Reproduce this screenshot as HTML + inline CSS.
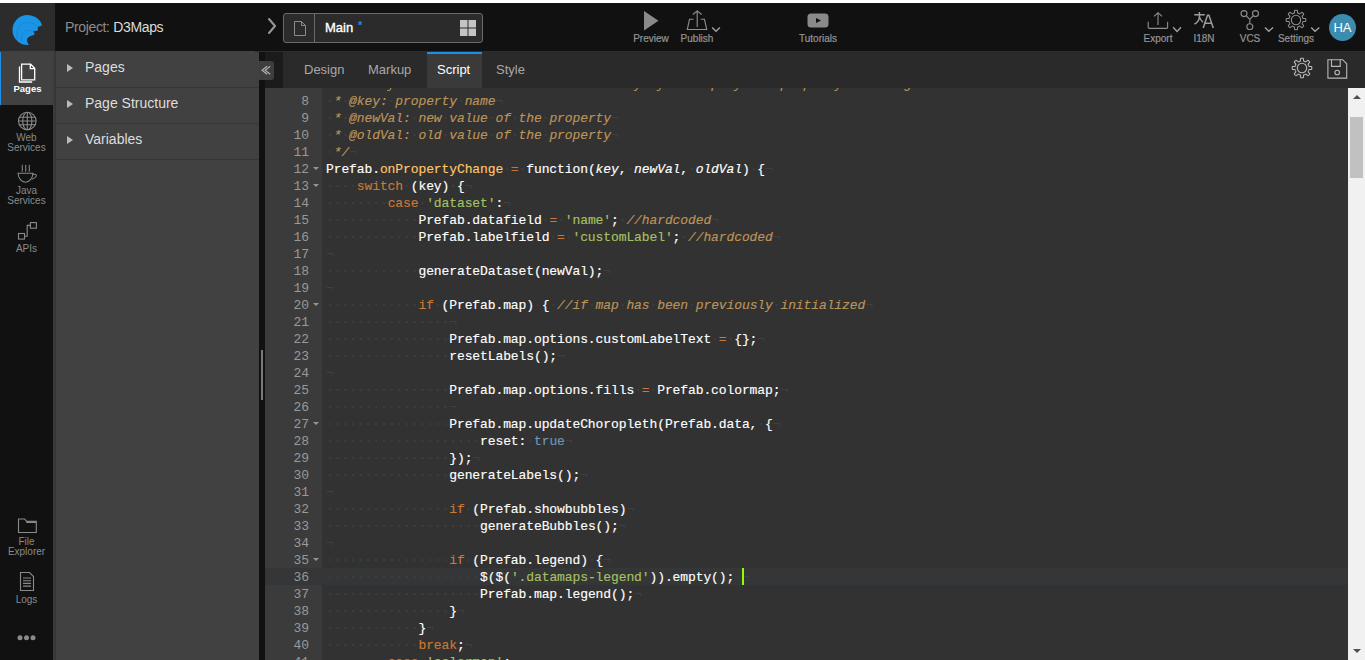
<!DOCTYPE html>
<html><head><meta charset="utf-8">
<style>
*{margin:0;padding:0;box-sizing:border-box}
html,body{width:1365px;height:660px;overflow:hidden;background:#fff;font-family:"Liberation Sans",sans-serif}
.a{position:absolute}
#hdr{left:0;top:3px;width:1365px;height:48px;background:#111}
#logo{left:0;top:0;width:55px;height:48px;background:#2c2c2c}
#nav{left:0;top:51px;width:53px;height:609px;background:#111}
#navb{left:53px;top:51px;width:3px;height:609px;background:#3b3b3b;border-right:1px solid #353535}
#panel{left:56px;top:51px;width:203px;height:609px;background:#414141}
.prow{position:absolute;left:0;width:203px;height:36px;border-bottom:1px solid #363636;color:#ddd;font-size:14px}
.prow .tri{position:absolute;left:11px;top:12px;width:0;height:0;border-left:6px solid #bbb;border-top:4px solid transparent;border-bottom:4px solid transparent}
.prow span{position:absolute;left:29px;top:7px}
#split{left:259px;top:52px;width:6px;height:608px;background:#111}
#tabbar{left:265px;top:52px;width:1100px;height:36px;background:#2a2a2a}
#tline{left:255px;top:51px;width:1110px;height:1px;background:#2e2e2e}
.tab{position:absolute;top:10px;font-size:13px;color:#a8a8a8}
#editor{left:265px;top:88px;width:1100px;height:572px;background:#323232;overflow:hidden}
#gutter{left:0;top:0;width:57px;height:572px;background:#3b3b3b;overflow:hidden}
#actline{left:57px;top:480px;width:1043px;height:17px;background:#353637}
#gact{left:0;top:480px;width:57px;height:17px;background:#353637}
.gn{position:absolute;left:0;width:44px;height:17px;text-align:right;font:13px/17px "Liberation Mono",monospace;letter-spacing:-0.1px;color:#999;padding-top:1px}
.gn u{position:absolute;left:47.5px;top:7px;width:0;height:0;border-top:3.5px solid #959595;border-left:3px solid transparent;border-right:3px solid transparent}
#code{left:61px;top:0;width:1000px;height:572px}
.ln{position:absolute;left:0;height:17px;white-space:pre;font:13px/17px "Liberation Mono",monospace;letter-spacing:-0.1px;color:#fff;padding-top:1px;-webkit-text-stroke:0.15px}
.ln b{font-weight:normal}
.ln i{font-style:normal;color:#404040}
.ln .k{color:#CC7833}
.ln .s{color:#A5C261}
.ln .t{color:#6C99BB}
.ln .c{color:#BC9458;font-style:italic}
.ln .f{color:#FFC66D}
.ln .p{font-style:italic}
#cursor{left:477px;top:480px;width:2px;height:17px;background:#91FF00}
#vscroll{left:1083px;top:0;width:17px;height:572px;background:#f1f1f1}
#thumb{left:2px;top:29px;width:13px;height:61px;background:#c1c1c1}
#sup{left:4.5px;top:7px;width:0;height:0;border-bottom:4px solid #505050;border-left:4.5px solid transparent;border-right:4.5px solid transparent}
#sdn{left:4.5px;top:561px;width:0;height:0;border-top:4px solid #505050;border-left:4.5px solid transparent;border-right:4.5px solid transparent}
.navi{position:absolute;left:0;width:53px;text-align:center;color:#8a8a8a;font-size:10px;line-height:10px}
.tb{position:absolute;color:#959595;font-size:10px;text-align:center;-webkit-text-stroke:0.2px #959595}
.chev{position:absolute}
</style></head><body>
<div id="hdr" class="a">
  <div id="logo" class="a"><svg class="a" style="left:0;top:-3px" width="55" height="51" viewBox="0 0 55 51">
   <path fill="#1a95e6" d="M28.9,44.9 A15,15 0 1 1 26.5,15 C31,15 35,16.5 37.5,18.5 C39.8,20.3 41.5,23 42,25.3 C40,26.8 38.5,26.8 37.3,27.1 C38.2,28 38.2,29.5 37.6,30.4 C36,31 34,31 32.9,31.5 C34.2,32.3 34.8,33.8 34.4,34.7 C32.5,35.3 30,36 28.4,37.3 C27,38.5 26.8,40.5 27.3,41.8 C27.7,43 28.2,44.3 28.9,44.9 Z"/>
   <path fill="none" stroke="#1580cc" stroke-width="0.7" d="M17.5,40 C16,33 17.5,27 22.5,23.6 C25,22.5 29,22.5 31.6,23 C33.5,23.3 35,24.3 35.8,25.3"/>
   <path fill="none" stroke="#1580cc" stroke-width="0.7" d="M21.8,41 C21,37 21.5,33 25.5,30.5 C27.5,29.8 31,30 32.9,31.5"/>
  </svg></div>
  <div class="a" style="left:65px;top:16px;font-size:14px;letter-spacing:-0.35px;color:#8c8c8c;white-space:nowrap">Project: <span style="color:#dcdcdc">D3Maps</span></div>
  <svg class="a" style="left:266px;top:14px" width="12" height="18" viewBox="0 0 12 18"><path d="M3,2 L9,9 L3,16" fill="none" stroke="#999" stroke-width="2" stroke-linecap="round" stroke-linejoin="round"/></svg>
  <div class="a" style="left:283px;top:10px;width:200px;height:30px;border:1px solid #6a6a6a;border-radius:3px;background:#2b2b2b">
    <div class="a" style="left:30px;top:0;width:1px;height:28px;background:#6a6a6a"></div>
    <svg class="a" style="left:9px;top:6px" width="14" height="17" viewBox="0 0 14 17"><path d="M1.5,1.5 H8.5 L12.5,5.5 V15.5 H1.5 Z M8.5,1.5 V5.5 H12.5" fill="none" stroke="#8a8a8a" stroke-width="1"/></svg>
    <div class="a" style="left:41px;top:6px;font-size:13px;color:#fff;-webkit-text-stroke:0.35px #fff">Main</div>
    <div class="a" style="left:74px;top:5px;font-size:11px;font-weight:bold;color:#2a86e0">*</div>
    <svg class="a" style="left:176px;top:6px" width="17" height="17" viewBox="0 0 17 17"><g fill="#c4c4c4"><rect x="0" y="0" width="7.5" height="7.5"/><rect x="8.5" y="0" width="7.5" height="7.5"/><rect x="0" y="8.5" width="7.5" height="7.5"/><rect x="8.5" y="8.5" width="7.5" height="7.5"/></g></svg>
  </div>
  <!-- toolbar -->
  <svg class="a" style="left:644px;top:8px" width="15" height="20" viewBox="0 0 15 20"><path d="M0,0 L14.5,9.8 L0,19.6 Z" fill="#8a8a8a"/></svg>
  <div class="tb" style="left:621px;top:30px;width:60px">Preview</div>
  <svg class="a" style="left:685px;top:3px" width="24" height="26" viewBox="0 0 24 26"><g fill="none" stroke="#8f8f8f" stroke-width="1.1"><path d="M12.2,21 V5 M7.8,8.5 L12.2,4.9 L16.6,8.5"/><path d="M8.5,13.3 H4.5 L2.3,23.5 H21.7 L19.5,13.3 H15.8"/></g></svg>
  <svg class="chev" style="left:711px;top:22px" width="10" height="8" viewBox="0 0 10 8"><path d="M1.2,2.5 L5,6.3 L8.9,2.5" fill="none" stroke="#a0a0a0" stroke-width="1.4"/></svg>
  <div class="tb" style="left:667px;top:30px;width:60px">Publish</div>
  <svg class="a" style="left:807px;top:10px" width="22" height="15" viewBox="0 0 22 15"><rect x="0.5" y="0.5" width="21" height="14" rx="3.5" fill="#8a8a8a"/><path d="M9,5 L14,7.5 L9,10 Z" fill="#111"/></svg>
  <div class="tb" style="left:788px;top:30px;width:60px">Tutorials</div>
  <svg class="a" style="left:1146px;top:5px" width="24" height="24" viewBox="0 0 24 24"><g fill="none" stroke="#8f8f8f" stroke-width="1.1"><path d="M12,17 V5 M8,8.4 L12,4.7 L16.1,8.4"/><path d="M2.2,13.8 V19.5 Q2.2,20.4 3.2,20.4 H20.6 Q21.6,20.4 21.6,19.5 V13.8"/></g></svg>
  <svg class="chev" style="left:1172px;top:22px" width="10" height="8" viewBox="0 0 10 8"><path d="M1.1,2.3 L5.1,6.4 L9,2.3" fill="none" stroke="#a0a0a0" stroke-width="1.4"/></svg>
  <div class="tb" style="left:1128px;top:30px;width:60px">Export</div>
  <svg class="a" style="left:1190px;top:5px" width="28" height="26" viewBox="1190 8 28 26"><g fill="none" stroke="#9c9c9c" stroke-width="1.5"><path d="M1194.2,14.8 H1204.8 M1199.4,12 V16.5 C1199.4,19.5 1197.5,22.5 1194.4,24.2 M1199.6,17.5 C1200.5,19.5 1201.6,21 1203,22.3"/><path d="M1203.2,27.9 L1207.5,15.2 H1208.9 L1213.3,27.9 M1204.8,23.3 H1211.6"/></g></svg>
  
  <div class="tb" style="left:1174px;top:30px;width:60px">I18N</div>
  <svg class="a" style="left:1238px;top:3px" width="24" height="24" viewBox="0 0 24 24"><g fill="none" stroke="#8f8f8f" stroke-width="1.1"><circle cx="6" cy="7.6" r="3"/><circle cx="17.5" cy="7.6" r="3"/><circle cx="11.8" cy="20.7" r="3"/><path d="M8.4,10 L11.8,13.3 L15.1,10 M11.8,13.3 V17.7"/></g></svg>
  <svg class="chev" style="left:1264px;top:22px" width="10" height="8" viewBox="0 0 10 8"><path d="M1,2.4 L4.8,6.2 L9.1,2.4" fill="none" stroke="#a0a0a0" stroke-width="1.4"/></svg>
  <div class="tb" style="left:1220px;top:30px;width:60px">VCS</div>
  <svg class="a" style="left:1285px;top:6px" width="22" height="22" viewBox="-11 -11 22 22"><path fill="none" stroke="#8f8f8f" stroke-width="1.1" stroke-linejoin="round" d="M0.00,-9.80 L0.38,-9.79 L0.77,-9.77 L1.15,-9.73 L1.44,-9.09 L1.55,-7.78 L1.66,-6.93 L1.93,-6.83 L2.19,-6.75 L2.46,-6.66 L2.72,-6.56 L2.97,-6.45 L3.22,-6.33 L3.47,-6.19 L3.72,-6.08 L4.41,-6.60 L5.41,-7.44 L6.07,-7.70 L6.36,-7.45 L6.65,-7.20 L6.93,-6.93 L7.20,-6.65 L7.45,-6.36 L7.70,-6.07 L7.44,-5.41 L6.60,-4.41 L6.08,-3.72 L6.19,-3.47 L6.33,-3.22 L6.45,-2.97 L6.56,-2.72 L6.66,-2.46 L6.75,-2.19 L6.83,-1.93 L6.93,-1.66 L7.78,-1.55 L9.09,-1.44 L9.73,-1.15 L9.77,-0.77 L9.79,-0.38 L9.80,0.00 L9.79,0.38 L9.77,0.77 L9.73,1.15 L9.09,1.44 L7.78,1.55 L6.93,1.66 L6.83,1.93 L6.75,2.19 L6.66,2.46 L6.56,2.72 L6.45,2.97 L6.33,3.22 L6.19,3.47 L6.08,3.72 L6.60,4.41 L7.44,5.41 L7.70,6.07 L7.45,6.36 L7.20,6.65 L6.93,6.93 L6.65,7.20 L6.36,7.45 L6.07,7.70 L5.41,7.44 L4.41,6.60 L3.72,6.08 L3.47,6.19 L3.22,6.33 L2.97,6.45 L2.72,6.56 L2.46,6.66 L2.19,6.75 L1.93,6.83 L1.66,6.93 L1.55,7.78 L1.44,9.09 L1.15,9.73 L0.77,9.77 L0.38,9.79 L0.00,9.80 L-0.38,9.79 L-0.77,9.77 L-1.15,9.73 L-1.44,9.09 L-1.55,7.78 L-1.66,6.93 L-1.93,6.83 L-2.19,6.75 L-2.46,6.66 L-2.72,6.56 L-2.97,6.45 L-3.22,6.33 L-3.47,6.19 L-3.72,6.08 L-4.41,6.60 L-5.41,7.44 L-6.07,7.70 L-6.36,7.45 L-6.65,7.20 L-6.93,6.93 L-7.20,6.65 L-7.45,6.36 L-7.70,6.07 L-7.44,5.41 L-6.60,4.41 L-6.08,3.72 L-6.19,3.47 L-6.33,3.22 L-6.45,2.97 L-6.56,2.72 L-6.66,2.46 L-6.75,2.19 L-6.83,1.93 L-6.93,1.66 L-7.78,1.55 L-9.09,1.44 L-9.73,1.15 L-9.77,0.77 L-9.79,0.38 L-9.80,0.00 L-9.79,-0.38 L-9.77,-0.77 L-9.73,-1.15 L-9.09,-1.44 L-7.78,-1.55 L-6.93,-1.66 L-6.83,-1.93 L-6.75,-2.19 L-6.66,-2.46 L-6.56,-2.72 L-6.45,-2.97 L-6.33,-3.22 L-6.19,-3.47 L-6.08,-3.72 L-6.60,-4.41 L-7.44,-5.41 L-7.70,-6.07 L-7.45,-6.36 L-7.20,-6.65 L-6.93,-6.93 L-6.65,-7.20 L-6.36,-7.45 L-6.07,-7.70 L-5.41,-7.44 L-4.41,-6.60 L-3.72,-6.08 L-3.47,-6.19 L-3.22,-6.33 L-2.97,-6.45 L-2.72,-6.56 L-2.46,-6.66 L-2.19,-6.75 L-1.93,-6.83 L-1.66,-6.93 L-1.55,-7.78 L-1.44,-9.09 L-1.15,-9.73 L-0.77,-9.77 L-0.38,-9.79 Z"/><circle r="4.7" fill="none" stroke="#8f8f8f" stroke-width="1.1"/></svg>
  <svg class="chev" style="left:1310px;top:22px" width="10" height="8" viewBox="0 0 10 8"><path d="M1.2,2.4 L5,6.2 L9.3,2.4" fill="none" stroke="#a0a0a0" stroke-width="1.4"/></svg>
  <div class="tb" style="left:1266px;top:30px;width:60px">Settings</div>
  <div class="a" style="left:1329px;top:11px;width:27px;height:27px;border-radius:50%;background:#3b8caf;color:#fff;font-size:13px;line-height:27px;text-align:center">HA</div>
</div>
<div id="nav" class="a">
  <div class="a" style="left:0;top:0;width:53px;height:54px;background:#414141"></div>
  <div class="a" style="left:0;top:1px;width:1px;height:53px;background:#1d8fe6"></div>
  <svg class="a" style="left:18px;top:12px" width="19" height="21" viewBox="0 0 19 21"><g fill="none" stroke="#fff" stroke-width="1.3"><path d="M3.6,1.2 H12.6 L16.7,5.3 V16.9 H3.6 Z M12.3,1.5 V5.6 H16.4"/><path d="M1.5,3.5 V19 H14.2"/></g></svg>
  <div class="navi" style="top:33px;color:#fff;font-weight:bold;font-size:9.5px;left:1px">Pages</div>
  <svg class="a" style="left:17px;top:60px" width="21" height="21" viewBox="0 0 21 21"><g fill="none" stroke="#8a8a8a" stroke-width="1.1"><circle cx="10.3" cy="10" r="8.8"/><ellipse cx="10.3" cy="10" rx="4.6" ry="8.8"/><path d="M10.3,1.2 V18.8 M1.5,10 H19.1 M2.6,6.3 H18 M2.6,13.7 H18"/></g></svg>
  <div class="navi" style="top:81.5px">Web</div>
  <div class="navi" style="top:91.5px">Services</div>
  <svg class="a" style="left:17px;top:112px" width="21" height="21" viewBox="0 0 21 21"><g fill="none" stroke="#8a8a8a" stroke-width="1.05"><path d="M5.6,1.8 C4.2,3.4 6.4,5.6 4.9,8.7 M9.1,1.8 C7.7,3.4 9.9,5.6 8.4,8.7 M12.6,1.8 C11.2,3.4 13.4,5.6 11.9,8.7"/><path d="M1,10.3 H16 C15.5,15.5 12.5,19.2 8.5,19.2 C4.5,19.2 1.5,15.5 1,10.3 Z"/><path d="M15.8,11.6 C18,10.6 19.9,11.6 19.3,13.1 C18.7,14.6 16.6,15.6 14.8,16.3"/></g></svg>
  <div class="navi" style="top:134.5px">Java</div>
  <div class="navi" style="top:144.5px">Services</div>
  <svg class="a" style="left:17px;top:170px" width="21" height="20" viewBox="0 0 21 20"><g fill="none" stroke="#8a8a8a" stroke-width="1.1"><rect x="1.5" y="12.5" width="6" height="5.6"/><rect x="13.4" y="1.6" width="6" height="5.6"/><path d="M7.5,15.3 H10.2 V4.4 H13.4"/></g></svg>
  <div class="navi" style="top:192.5px">APIs</div>
  <svg class="a" style="left:17px;top:466px" width="21" height="17" viewBox="0 0 21 17"><g fill="none" stroke="#8a8a8a" stroke-width="1.1"><path d="M1.5,15.5 V2 H7.6 L9.4,4.2 H19.3 V15.5 Z"/><path d="M9.2,5.1 H19.3" stroke-width="1.8"/></g></svg>
  <div class="navi" style="top:485.5px">File</div>
  <div class="navi" style="top:495.5px">Explorer</div>
  <svg class="a" style="left:19px;top:520px" width="16" height="21" viewBox="0 0 16 21"><g fill="none" stroke="#8a8a8a" stroke-width="1.1"><path d="M1.5,1.5 H10.5 L14.5,5.5 V19.5 H1.5 Z"/><path d="M4,7 H12 M4,9.7 H12 M4,12.4 H12 M4,15.1 H12"/></g></svg>
  <div class="navi" style="top:543.5px">Logs</div>
  <svg class="a" style="left:16px;top:583px" width="22" height="8" viewBox="0 0 22 8"><g fill="#8a8a8a"><circle cx="4" cy="3.7" r="2.5"/><circle cx="10.5" cy="3.7" r="2.5"/><circle cx="17" cy="3.7" r="2.5"/></g></svg>
</div>
<div id="navb" class="a"></div>
<div id="panel" class="a">
  <div class="prow" style="top:1px"><i class="tri"></i><span>Pages</span></div>
  <div class="prow" style="top:37px"><i class="tri"></i><span>Page Structure</span></div>
  <div class="prow" style="top:73px"><i class="tri"></i><span>Variables</span></div>
</div>
<div id="split" class="a"></div>
<div id="tline" class="a"></div>
<div id="tabbar" class="a">
  <div class="a" style="left:0;top:0;width:18px;height:36px;background:#1b1b1b"></div>
  <div class="tab" style="left:39px">Design</div>
  <div class="tab" style="left:103px">Markup</div>
  <div class="a" style="left:162px;top:0;width:55px;height:36px;background:#3a3a3a;border-top:2px solid #1d8fe6"></div>
  <div class="tab" style="left:172px;color:#fff">Script</div>
  <div class="tab" style="left:231px">Style</div>
  <svg class="a" style="left:1026px;top:5px" width="22" height="22" viewBox="-11 -11 22 22"><path fill="none" stroke="#b8b8b8" stroke-width="1.1" stroke-linejoin="round" d="M0.00,-9.80 L0.38,-9.79 L0.77,-9.77 L1.15,-9.73 L1.44,-9.09 L1.55,-7.78 L1.66,-6.93 L1.93,-6.83 L2.19,-6.75 L2.46,-6.66 L2.72,-6.56 L2.97,-6.45 L3.22,-6.33 L3.47,-6.19 L3.72,-6.08 L4.41,-6.60 L5.41,-7.44 L6.07,-7.70 L6.36,-7.45 L6.65,-7.20 L6.93,-6.93 L7.20,-6.65 L7.45,-6.36 L7.70,-6.07 L7.44,-5.41 L6.60,-4.41 L6.08,-3.72 L6.19,-3.47 L6.33,-3.22 L6.45,-2.97 L6.56,-2.72 L6.66,-2.46 L6.75,-2.19 L6.83,-1.93 L6.93,-1.66 L7.78,-1.55 L9.09,-1.44 L9.73,-1.15 L9.77,-0.77 L9.79,-0.38 L9.80,0.00 L9.79,0.38 L9.77,0.77 L9.73,1.15 L9.09,1.44 L7.78,1.55 L6.93,1.66 L6.83,1.93 L6.75,2.19 L6.66,2.46 L6.56,2.72 L6.45,2.97 L6.33,3.22 L6.19,3.47 L6.08,3.72 L6.60,4.41 L7.44,5.41 L7.70,6.07 L7.45,6.36 L7.20,6.65 L6.93,6.93 L6.65,7.20 L6.36,7.45 L6.07,7.70 L5.41,7.44 L4.41,6.60 L3.72,6.08 L3.47,6.19 L3.22,6.33 L2.97,6.45 L2.72,6.56 L2.46,6.66 L2.19,6.75 L1.93,6.83 L1.66,6.93 L1.55,7.78 L1.44,9.09 L1.15,9.73 L0.77,9.77 L0.38,9.79 L0.00,9.80 L-0.38,9.79 L-0.77,9.77 L-1.15,9.73 L-1.44,9.09 L-1.55,7.78 L-1.66,6.93 L-1.93,6.83 L-2.19,6.75 L-2.46,6.66 L-2.72,6.56 L-2.97,6.45 L-3.22,6.33 L-3.47,6.19 L-3.72,6.08 L-4.41,6.60 L-5.41,7.44 L-6.07,7.70 L-6.36,7.45 L-6.65,7.20 L-6.93,6.93 L-7.20,6.65 L-7.45,6.36 L-7.70,6.07 L-7.44,5.41 L-6.60,4.41 L-6.08,3.72 L-6.19,3.47 L-6.33,3.22 L-6.45,2.97 L-6.56,2.72 L-6.66,2.46 L-6.75,2.19 L-6.83,1.93 L-6.93,1.66 L-7.78,1.55 L-9.09,1.44 L-9.73,1.15 L-9.77,0.77 L-9.79,0.38 L-9.80,0.00 L-9.79,-0.38 L-9.77,-0.77 L-9.73,-1.15 L-9.09,-1.44 L-7.78,-1.55 L-6.93,-1.66 L-6.83,-1.93 L-6.75,-2.19 L-6.66,-2.46 L-6.56,-2.72 L-6.45,-2.97 L-6.33,-3.22 L-6.19,-3.47 L-6.08,-3.72 L-6.60,-4.41 L-7.44,-5.41 L-7.70,-6.07 L-7.45,-6.36 L-7.20,-6.65 L-6.93,-6.93 L-6.65,-7.20 L-6.36,-7.45 L-6.07,-7.70 L-5.41,-7.44 L-4.41,-6.60 L-3.72,-6.08 L-3.47,-6.19 L-3.22,-6.33 L-2.97,-6.45 L-2.72,-6.56 L-2.46,-6.66 L-2.19,-6.75 L-1.93,-6.83 L-1.66,-6.93 L-1.55,-7.78 L-1.44,-9.09 L-1.15,-9.73 L-0.77,-9.77 L-0.38,-9.79 Z"/><circle r="4.7" fill="none" stroke="#b8b8b8" stroke-width="1.1"/></svg>
  <svg class="a" style="left:1061px;top:5px" width="22" height="22" viewBox="0 0 22 22"><g fill="none" stroke="#b8b8b8" stroke-width="1.1"><path d="M1.9,2.7 H16.6 L20.7,6.8 V21.1 H1.9 Z"/><path d="M5.5,2.7 V9.4 H14.2 V2.7"/><circle cx="11.2" cy="15.5" r="2.3"/></g></svg>
</div>
<div class="a" style="left:259px;top:61px;width:15px;height:19px;background:#3e3e3e;border-radius:0 3px 3px 0"></div>
<svg class="a" style="left:259px;top:61px" width="15" height="19" viewBox="259 61 15 19"><path d="M267.1,66.2 L262,70.2 L267.1,74.2 M270.2,66.2 L265.1,70.2 L270.2,74.2" fill="none" stroke="#b4b4b4" stroke-width="1.1"/></svg>
<div class="a" style="left:261px;top:350px;width:2px;height:50px;background:#7a7a7a"></div>
<div id="editor" class="a">
<div id="actline" class="a"></div>
<div id="gutter" class="a"><div id="gact" class="a"></div><div class="gn" style="top:-13px">7</div><div class="gn" style="top:4px">8</div><div class="gn" style="top:21px">9</div><div class="gn" style="top:38px">10</div><div class="gn" style="top:55px">11</div><div class="gn" style="top:72px">12<u></u></div><div class="gn" style="top:89px">13<u></u></div><div class="gn" style="top:106px">14</div><div class="gn" style="top:123px">15</div><div class="gn" style="top:140px">16</div><div class="gn" style="top:157px">17</div><div class="gn" style="top:174px">18</div><div class="gn" style="top:191px">19</div><div class="gn" style="top:208px">20<u></u></div><div class="gn" style="top:225px">21</div><div class="gn" style="top:242px">22</div><div class="gn" style="top:259px">23</div><div class="gn" style="top:276px">24</div><div class="gn" style="top:293px">25</div><div class="gn" style="top:310px">26</div><div class="gn" style="top:327px">27<u></u></div><div class="gn" style="top:344px">28</div><div class="gn" style="top:361px">29</div><div class="gn" style="top:378px">30</div><div class="gn" style="top:395px">31</div><div class="gn" style="top:412px">32</div><div class="gn" style="top:429px">33</div><div class="gn" style="top:446px">34</div><div class="gn" style="top:463px">35<u></u></div><div class="gn" style="top:480px">36</div><div class="gn" style="top:497px">37</div><div class="gn" style="top:514px">38</div><div class="gn" style="top:531px">39</div><div class="gn" style="top:548px">40</div><div class="gn" style="top:565px">41</div></div>
<div id="code" class="a"><div class="ln" style="top:-13px"><i>·</i><b class="c">*</b><i>·</i><b class="c">This</b><i>·</i><b class="c">function</b><i>·</i><b class="c">will</b><i>·</i><b class="c">be</b><i>·</i><b class="c">invoked</b><i>·</i><b class="c">when</b><i>·</i><b class="c">any</b><i>·</i><b class="c">of</b><i>·</i><b class="c">this</b><i>·</i><b class="c">prefab's</b><i>·</i><b class="c">property</b><i>·</i><b class="c">is</b><i>·</i><b class="c">changed</b><i>¬</i></div><div class="ln" style="top:4px"><i>·</i><b class="c">*</b><i>·</i><b class="c">@key:</b><i>·</i><b class="c">property</b><i>·</i><b class="c">name</b><i>¬</i></div><div class="ln" style="top:21px"><i>·</i><b class="c">*</b><i>·</i><b class="c">@newVal:</b><i>·</i><b class="c">new</b><i>·</i><b class="c">value</b><i>·</i><b class="c">of</b><i>·</i><b class="c">the</b><i>·</i><b class="c">property</b><i>¬</i></div><div class="ln" style="top:38px"><i>·</i><b class="c">*</b><i>·</i><b class="c">@oldVal:</b><i>·</i><b class="c">old</b><i>·</i><b class="c">value</b><i>·</i><b class="c">of</b><i>·</i><b class="c">the</b><i>·</i><b class="c">property</b><i>¬</i></div><div class="ln" style="top:55px"><i>·</i><b class="c">*/</b><i>¬</i></div><div class="ln" style="top:72px">Prefab.<b class="f">onPropertyChange</b><i>·</i><b class="k">=</b><i>·</i>function(<b class="p">key</b>,<i>·</i><b class="p">newVal</b>,<i>·</i><b class="p">oldVal</b>)<i>·</i>{<i>¬</i></div><div class="ln" style="top:89px"><i>·</i><i>·</i><i>·</i><i>·</i><b class="k">switch</b><i>·</i>(key)<i>·</i>{<i>¬</i></div><div class="ln" style="top:106px"><i>·</i><i>·</i><i>·</i><i>·</i><i>·</i><i>·</i><i>·</i><i>·</i><b class="k">case</b><i>·</i><b class="s">'dataset'</b>:<i>¬</i></div><div class="ln" style="top:123px"><i>·</i><i>·</i><i>·</i><i>·</i><i>·</i><i>·</i><i>·</i><i>·</i><i>·</i><i>·</i><i>·</i><i>·</i>Prefab.datafield<i>·</i><b class="k">=</b><i>·</i><b class="s">'name'</b>;<i>·</i><b class="c">//hardcoded</b><i>¬</i></div><div class="ln" style="top:140px"><i>·</i><i>·</i><i>·</i><i>·</i><i>·</i><i>·</i><i>·</i><i>·</i><i>·</i><i>·</i><i>·</i><i>·</i>Prefab.labelfield<i>·</i><b class="k">=</b><i>·</i><b class="s">'customLabel'</b>;<i>·</i><b class="c">//hardcoded</b><i>¬</i></div><div class="ln" style="top:157px"><i>¬</i></div><div class="ln" style="top:174px"><i>·</i><i>·</i><i>·</i><i>·</i><i>·</i><i>·</i><i>·</i><i>·</i><i>·</i><i>·</i><i>·</i><i>·</i>generateDataset(newVal);<i>¬</i></div><div class="ln" style="top:191px"><i>¬</i></div><div class="ln" style="top:208px"><i>·</i><i>·</i><i>·</i><i>·</i><i>·</i><i>·</i><i>·</i><i>·</i><i>·</i><i>·</i><i>·</i><i>·</i><b class="k">if</b><i>·</i>(Prefab.map)<i>·</i>{<i>·</i><b class="c">//if</b><i>·</i><b class="c">map</b><i>·</i><b class="c">has</b><i>·</i><b class="c">been</b><i>·</i><b class="c">previously</b><i>·</i><b class="c">initialized</b><i>¬</i></div><div class="ln" style="top:225px"><i>·</i><i>·</i><i>·</i><i>·</i><i>·</i><i>·</i><i>·</i><i>·</i><i>·</i><i>·</i><i>·</i><i>·</i><i>·</i><i>·</i><i>·</i><i>·</i><i>¬</i></div><div class="ln" style="top:242px"><i>·</i><i>·</i><i>·</i><i>·</i><i>·</i><i>·</i><i>·</i><i>·</i><i>·</i><i>·</i><i>·</i><i>·</i><i>·</i><i>·</i><i>·</i><i>·</i>Prefab.map.options.customLabelText<i>·</i><b class="k">=</b><i>·</i>{};<i>¬</i></div><div class="ln" style="top:259px"><i>·</i><i>·</i><i>·</i><i>·</i><i>·</i><i>·</i><i>·</i><i>·</i><i>·</i><i>·</i><i>·</i><i>·</i><i>·</i><i>·</i><i>·</i><i>·</i>resetLabels();<i>¬</i></div><div class="ln" style="top:276px"><i>¬</i></div><div class="ln" style="top:293px"><i>·</i><i>·</i><i>·</i><i>·</i><i>·</i><i>·</i><i>·</i><i>·</i><i>·</i><i>·</i><i>·</i><i>·</i><i>·</i><i>·</i><i>·</i><i>·</i>Prefab.map.options.fills<i>·</i><b class="k">=</b><i>·</i>Prefab.colormap;<i>¬</i></div><div class="ln" style="top:310px"><i>·</i><i>·</i><i>·</i><i>·</i><i>·</i><i>·</i><i>·</i><i>·</i><i>·</i><i>·</i><i>·</i><i>·</i><i>·</i><i>·</i><i>·</i><i>·</i><i>¬</i></div><div class="ln" style="top:327px"><i>·</i><i>·</i><i>·</i><i>·</i><i>·</i><i>·</i><i>·</i><i>·</i><i>·</i><i>·</i><i>·</i><i>·</i><i>·</i><i>·</i><i>·</i><i>·</i>Prefab.map.updateChoropleth(Prefab.data,<i>·</i>{<i>¬</i></div><div class="ln" style="top:344px"><i>·</i><i>·</i><i>·</i><i>·</i><i>·</i><i>·</i><i>·</i><i>·</i><i>·</i><i>·</i><i>·</i><i>·</i><i>·</i><i>·</i><i>·</i><i>·</i><i>·</i><i>·</i><i>·</i><i>·</i>reset:<i>·</i><b class="t">true</b><i>¬</i></div><div class="ln" style="top:361px"><i>·</i><i>·</i><i>·</i><i>·</i><i>·</i><i>·</i><i>·</i><i>·</i><i>·</i><i>·</i><i>·</i><i>·</i><i>·</i><i>·</i><i>·</i><i>·</i>});<i>¬</i></div><div class="ln" style="top:378px"><i>·</i><i>·</i><i>·</i><i>·</i><i>·</i><i>·</i><i>·</i><i>·</i><i>·</i><i>·</i><i>·</i><i>·</i><i>·</i><i>·</i><i>·</i><i>·</i>generateLabels();<i>¬</i></div><div class="ln" style="top:395px"><i>¬</i></div><div class="ln" style="top:412px"><i>·</i><i>·</i><i>·</i><i>·</i><i>·</i><i>·</i><i>·</i><i>·</i><i>·</i><i>·</i><i>·</i><i>·</i><i>·</i><i>·</i><i>·</i><i>·</i><b class="k">if</b><i>·</i>(Prefab.showbubbles)<i>¬</i></div><div class="ln" style="top:429px"><i>·</i><i>·</i><i>·</i><i>·</i><i>·</i><i>·</i><i>·</i><i>·</i><i>·</i><i>·</i><i>·</i><i>·</i><i>·</i><i>·</i><i>·</i><i>·</i><i>·</i><i>·</i><i>·</i><i>·</i>generateBubbles();<i>¬</i></div><div class="ln" style="top:446px"><i>¬</i></div><div class="ln" style="top:463px"><i>·</i><i>·</i><i>·</i><i>·</i><i>·</i><i>·</i><i>·</i><i>·</i><i>·</i><i>·</i><i>·</i><i>·</i><i>·</i><i>·</i><i>·</i><i>·</i><b class="k">if</b><i>·</i>(Prefab.legend)<i>·</i>{<i>¬</i></div><div class="ln" style="top:480px"><i>·</i><i>·</i><i>·</i><i>·</i><i>·</i><i>·</i><i>·</i><i>·</i><i>·</i><i>·</i><i>·</i><i>·</i><i>·</i><i>·</i><i>·</i><i>·</i><i>·</i><i>·</i><i>·</i><i>·</i>$($(<b class="s">'.datamaps-legend'</b>)).empty();<i>·</i><i>¬</i></div><div class="ln" style="top:497px"><i>·</i><i>·</i><i>·</i><i>·</i><i>·</i><i>·</i><i>·</i><i>·</i><i>·</i><i>·</i><i>·</i><i>·</i><i>·</i><i>·</i><i>·</i><i>·</i><i>·</i><i>·</i><i>·</i><i>·</i>Prefab.map.legend();<i>¬</i></div><div class="ln" style="top:514px"><i>·</i><i>·</i><i>·</i><i>·</i><i>·</i><i>·</i><i>·</i><i>·</i><i>·</i><i>·</i><i>·</i><i>·</i><i>·</i><i>·</i><i>·</i><i>·</i>}<i>¬</i></div><div class="ln" style="top:531px"><i>·</i><i>·</i><i>·</i><i>·</i><i>·</i><i>·</i><i>·</i><i>·</i><i>·</i><i>·</i><i>·</i><i>·</i>}<i>¬</i></div><div class="ln" style="top:548px"><i>·</i><i>·</i><i>·</i><i>·</i><i>·</i><i>·</i><i>·</i><i>·</i><i>·</i><i>·</i><i>·</i><i>·</i><b class="k">break</b>;<i>¬</i></div><div class="ln" style="top:565px"><i>·</i><i>·</i><i>·</i><i>·</i><i>·</i><i>·</i><i>·</i><i>·</i><b class="k">case</b><i>·</i><b class="s">'colormap'</b>:<i>¬</i></div></div>
<svg class="a" style="left:0;top:0" width="600" height="5"><path d="M125.9,0 C125.7,1.5 125.2,2.4 124.1,2.5 L122.2,2.5 M395.4,0 C395.2,1.5 394.7,2.4 393.6,2.5 L391.7,2.5 M472.4,0 C472.2,1.5 471.7,2.4 470.6,2.5 L468.7,2.5" fill="none" stroke="#BC9458" stroke-width="1.1"/></svg><div id="cursor" class="a"></div>
<div id="vscroll" class="a"><div id="thumb" class="a"></div><div id="sup" class="a"></div><div id="sdn" class="a"></div></div>
</div>
</body></html>
